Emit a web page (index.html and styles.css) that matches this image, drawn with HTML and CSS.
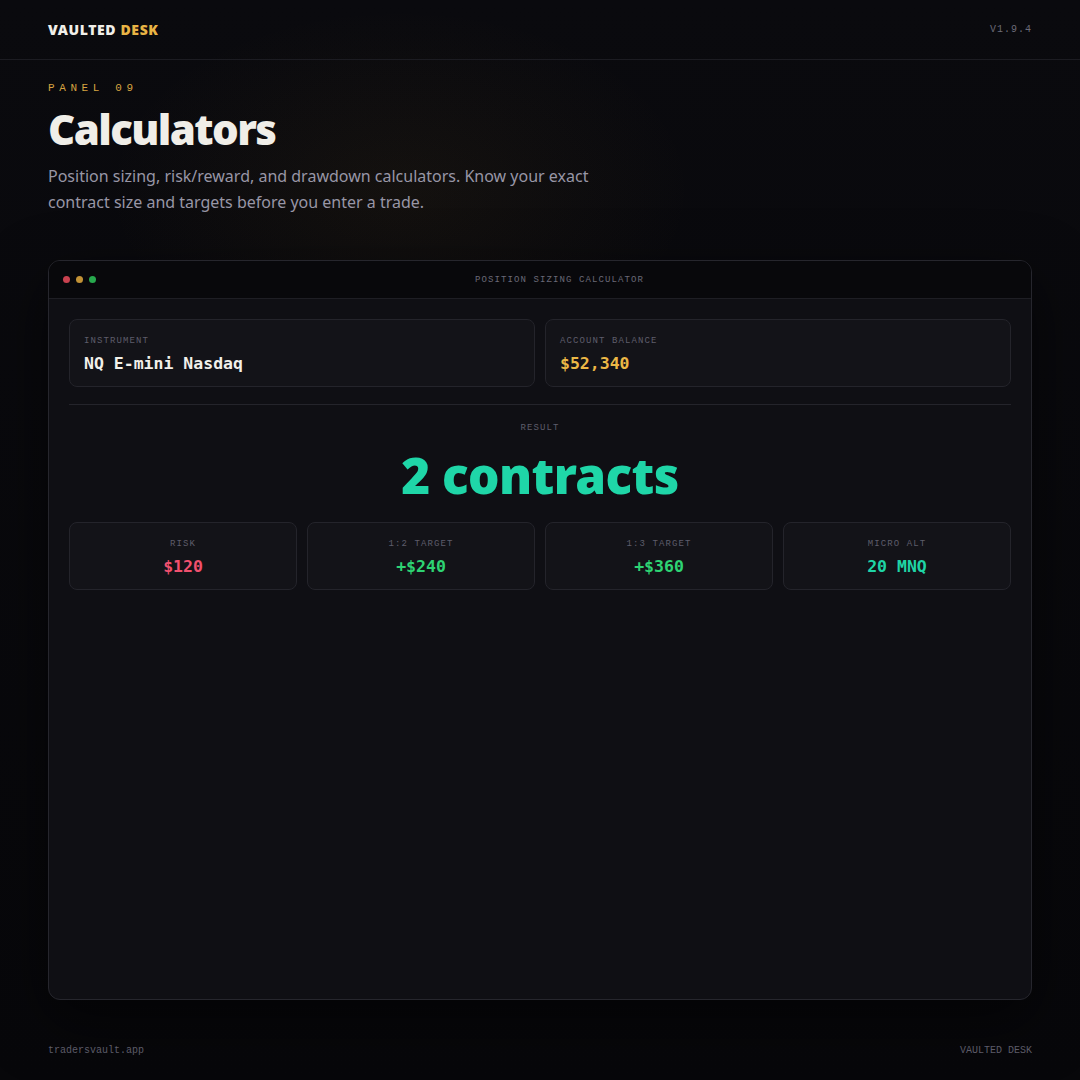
FILE: index.html
```html
<!DOCTYPE html>
<html lang="en">
<head>
<meta charset="utf-8">
<title>Vaulted Desk — Calculators</title>
<link rel="stylesheet" href="styles.css">
</head>
<body>
<div class="page">
  <header class="topbar">
    <div class="brand">VAULTED <span class="brand-accent">DESK</span></div>
    <div class="version">V1.9.4</div>
  </header>
  <section class="hero">
    <div class="eyebrow">PANEL 09</div>
    <h1 class="title">Calculators</h1>
    <p class="lede">Position sizing, risk/reward, and drawdown calculators. Know your exact contract size and targets before you enter a trade.</p>
  </section>
  <section class="window">
    <div class="window-bar">
      <div class="dots">
        <span class="dot dot-red"></span>
        <span class="dot dot-amber"></span>
        <span class="dot dot-green"></span>
      </div>
      <div class="window-title">POSITION SIZING CALCULATOR</div>
    </div>
    <div class="window-body">
      <div class="inputs">
        <div class="field">
          <div class="label">INSTRUMENT</div>
          <div class="value">NQ E-mini Nasdaq</div>
        </div>
        <div class="field">
          <div class="label">ACCOUNT BALANCE</div>
          <div class="value value-amber">$52,340</div>
        </div>
      </div>
      <div class="divider"></div>
      <div class="result-label">RESULT</div>
      <div class="result">2 contracts</div>
      <div class="stats">
        <div class="stat">
          <div class="label">RISK</div>
          <div class="value value-red">$120</div>
        </div>
        <div class="stat">
          <div class="label">1:2 TARGET</div>
          <div class="value value-green">+$240</div>
        </div>
        <div class="stat">
          <div class="label">1:3 TARGET</div>
          <div class="value value-green">+$360</div>
        </div>
        <div class="stat">
          <div class="label">MICRO ALT</div>
          <div class="value value-teal">20 MNQ</div>
        </div>
      </div>
    </div>
  </section>
  <footer class="footer">
    <div>tradersvault.app</div>
    <div>VAULTED DESK</div>
  </footer>
</div>
</body>
</html>
```

FILE: styles.css
```css
* { box-sizing: border-box; }
html, body { margin: 0; padding: 0; }
body {
  width: 1080px;
  height: 1080px;
  overflow: hidden;
  background: #08080c;
  font-family: "Noto Sans", "DejaVu Sans", sans-serif;
  color: #ecebe6;
}
.page {
  width: 1080px;
  height: 1080px;
  display: flex;
  flex-direction: column;
  background:
    radial-gradient(ellipse 420px 260px at 400px 190px, rgba(190, 140, 40, 0.06), rgba(190, 140, 40, 0) 70%),
    linear-gradient(180deg, #0a0a0e 0%, #07070a 100%);
}
.topbar {
  height: 60px;
  flex: none;
  display: flex;
  align-items: center;
  justify-content: space-between;
  padding: 0 48px;
  border-bottom: 1px solid #1c1c22;
}
.brand {
  font-weight: 900;
  font-size: 14px;
  letter-spacing: 0.6px;
  color: #f1efe9;
}
.brand-accent { color: #e9b444; }
.version {
  font-family: "Liberation Mono", "DejaVu Sans Mono", monospace;
  font-size: 10px;
  letter-spacing: 1px;
  color: #6c6b78;
}
.hero {
  flex: none;
  padding: 21px 48px 0;
}
.eyebrow {
  font-family: "Liberation Mono", "DejaVu Sans Mono", monospace;
  font-size: 11px;
  line-height: 14px;
  letter-spacing: 4.6px;
  color: #d6a441;
}
.title {
  margin: 10px 0 0;
  font-size: 42px;
  line-height: 48px;
  font-weight: 900;
  letter-spacing: -1.6px;
  color: #f0eee8;
}
.lede {
  margin: 10px 0 0;
  width: 560px;
  font-size: 16px;
  line-height: 26px;
  color: #9896a6;
}
.window {
  flex: none;
  margin: 45px 48px 0;
  height: 740px;
  border: 1px solid #26262d;
  border-radius: 12px;
  background: #0f0f14;
  overflow: hidden;
  box-shadow: 0 20px 60px rgba(0, 0, 0, 0.55);
}
.window-bar {
  height: 38px;
  display: flex;
  align-items: center;
  gap: 6px;
  background: #08080b;
  border-bottom: 1px solid #1e1e24;
  padding: 0 14px;
}
.dots { display: flex; gap: 6px; flex: none; }
.dot { width: 7px; height: 7px; border-radius: 50%; }
.dot-red { background: #c8414f; }
.dot-amber { background: #c29236; }
.dot-green { background: #27a84d; }
.window-title {
  flex: 1;
  text-align: center;
  font-family: "Liberation Mono", "DejaVu Sans Mono", monospace;
  font-size: 9px;
  letter-spacing: 1.1px;
  color: #6a6977;
}
.window-body {
  padding: 20px 20px;
}
.inputs {
  display: grid;
  grid-template-columns: 1fr 1fr;
  gap: 10px;
}
.field, .stat {
  height: 68px;
  border: 1px solid #24242b;
  border-radius: 8px;
  background: #131318;
  padding: 15px 14px 0;
}
.label {
  font-family: "Liberation Mono", "DejaVu Sans Mono", monospace;
  font-size: 9px;
  line-height: 12px;
  letter-spacing: 1.1px;
  color: #5e5d6b;
}
.value {
  margin-top: 7px;
  font-family: "DejaVu Sans Mono", "Liberation Mono", monospace;
  font-weight: 700;
  font-size: 16.5px;
  line-height: 20px;
  color: #f2f0ea;
}
.value-amber { color: #ecb846; }
.value-red { color: #f1506e; }
.value-green { color: #2ed373; }
.value-teal { color: #1fd5a6; }
.divider {
  height: 1px;
  background: #24242b;
  margin-top: 17px;
}
.result-label {
  margin-top: 17px;
  text-align: center;
  font-family: "Liberation Mono", "DejaVu Sans Mono", monospace;
  font-size: 9px;
  line-height: 12px;
  letter-spacing: 1.1px;
  color: #5e5d6b;
}
.result {
  margin-top: 11px;
  text-align: center;
  font-size: 49.5px;
  line-height: 60px;
  font-weight: 900;
  letter-spacing: -0.6px;
  color: #1fd6a8;
}
.stats {
  margin-top: 17px;
  display: grid;
  grid-template-columns: repeat(4, 1fr);
  gap: 10px;
}
.stat { text-align: center; }
.footer {
  flex: none;
  display: flex;
  justify-content: space-between;
  padding: 44px 48px 0;
  font-family: "Liberation Mono", "DejaVu Sans Mono", monospace;
  font-size: 10px;
  line-height: 14px;
  color: #5c5b68;
}
```
